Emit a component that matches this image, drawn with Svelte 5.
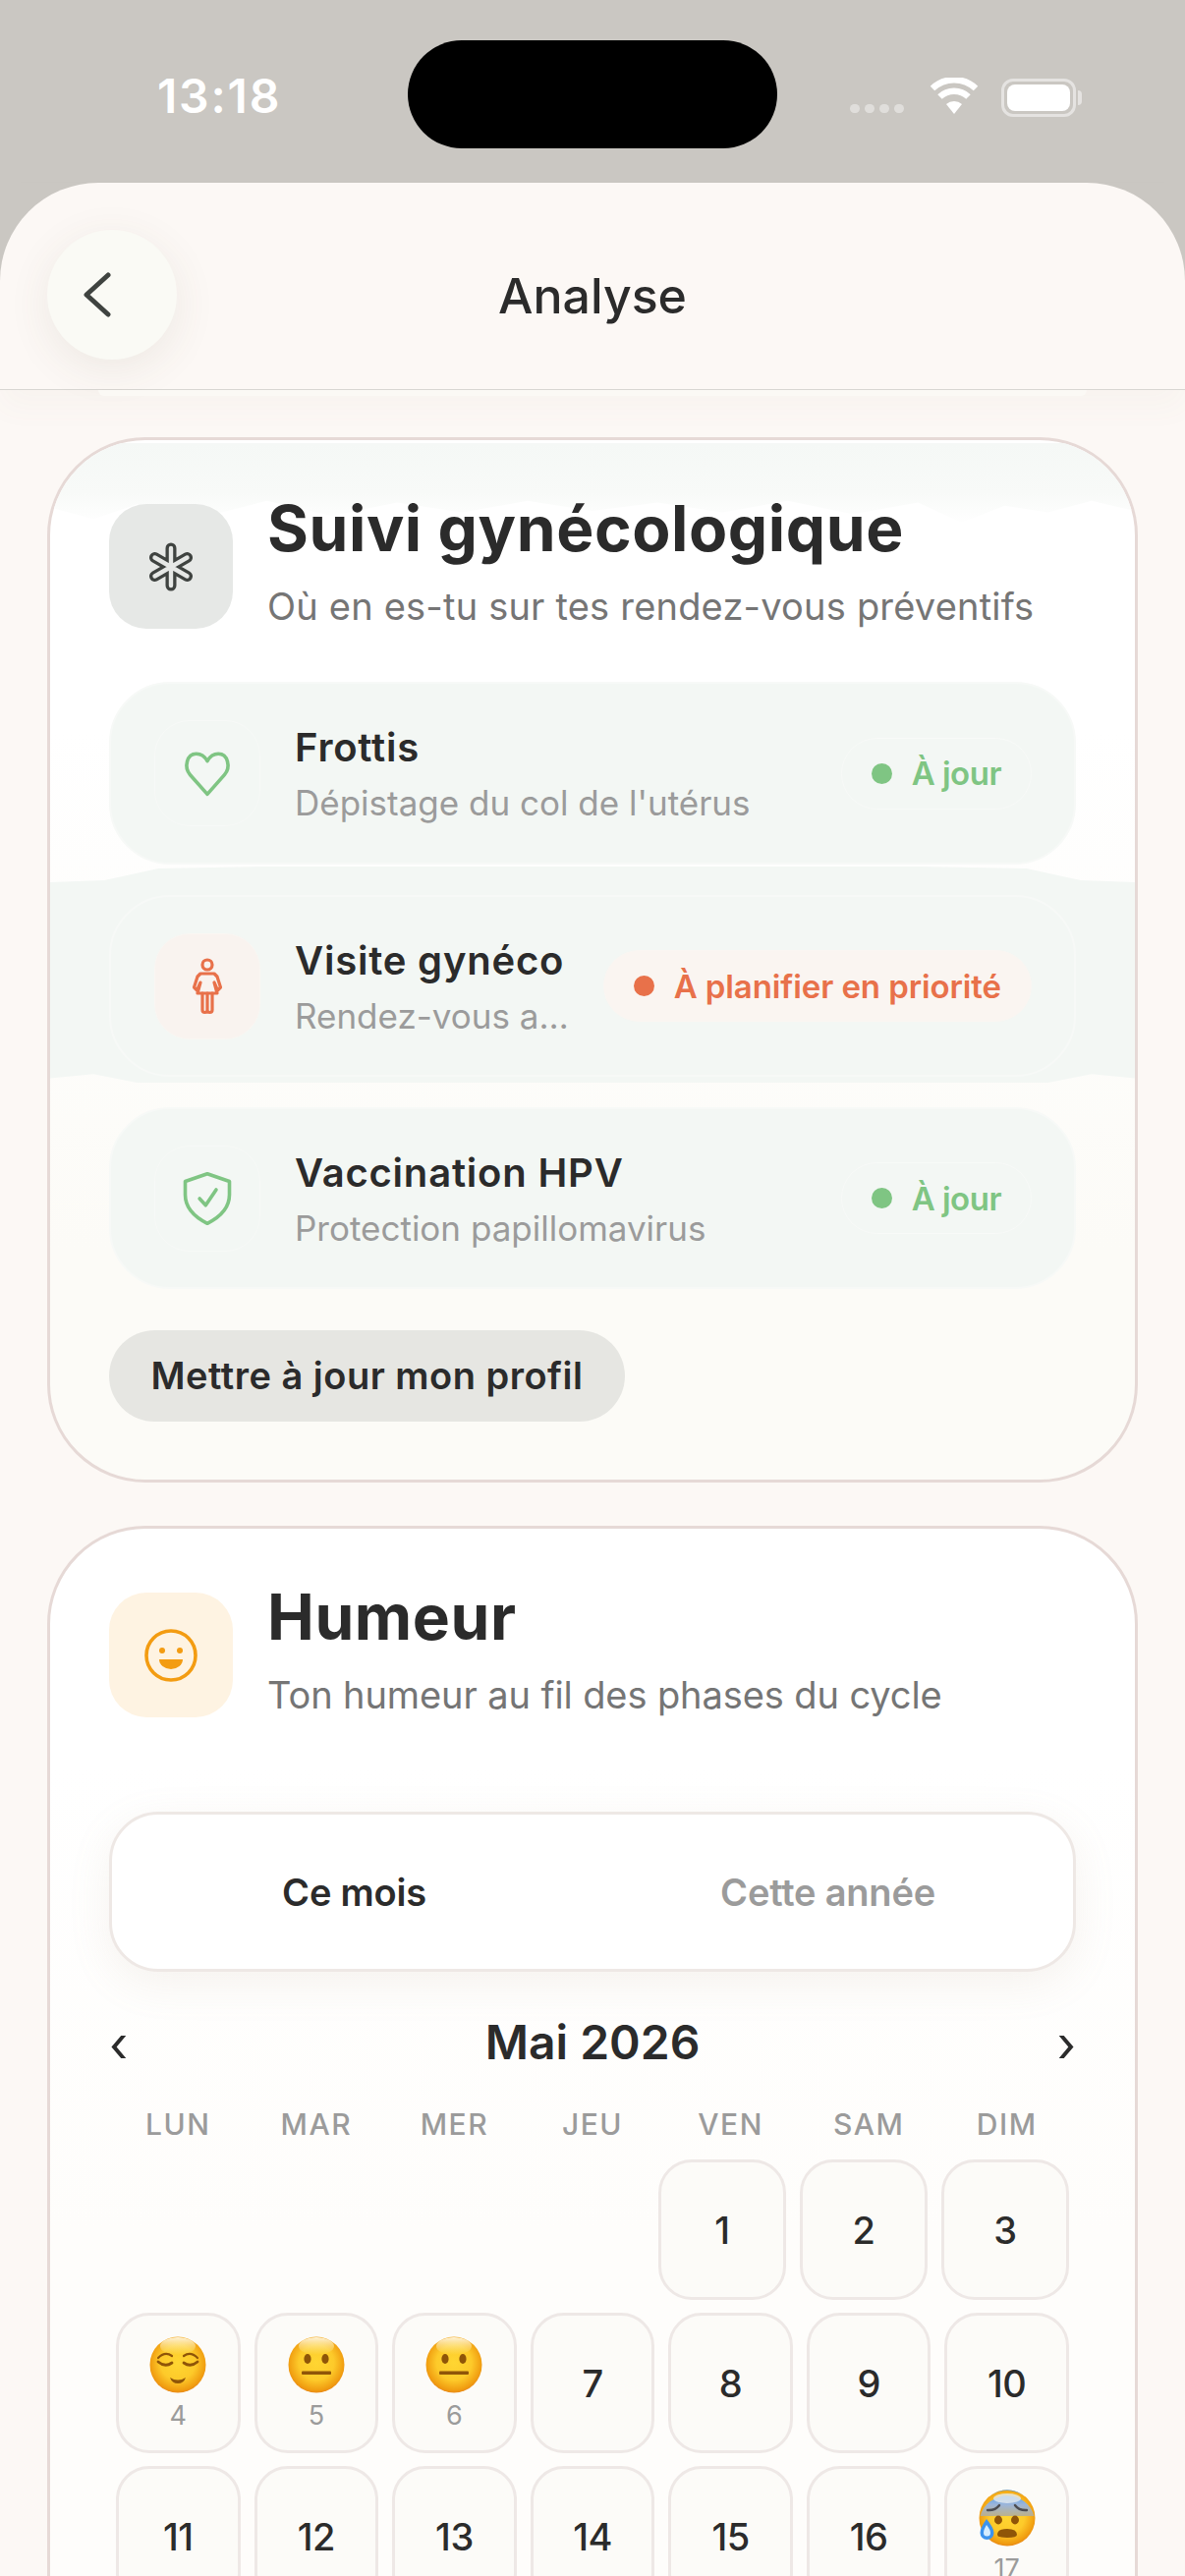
<script>
  const rows = [
    { title: 'Frottis', sub: "Dépistage du col de l'utérus", icon: 'heart', status: 'À jour', tone: 'ok' },
    { title: 'Visite gynéco', sub: 'Rendez-vous a…', icon: 'woman', status: 'À planifier en priorité', tone: 'warn' },
    { title: 'Vaccination HPV', sub: 'Protection papillomavirus', icon: 'shield', status: 'À jour', tone: 'ok' }
  ];
  const days = ['LUN', 'MAR', 'MER', 'JEU', 'VEN', 'SAM', 'DIM'];
  const firstWeek = [1, 2, 3];
  const weeks = [
    [
      { n: 4, mood: 'relieved' }, { n: 5, mood: 'neutral' }, { n: 6, mood: 'neutral' },
      { n: 7 }, { n: 8 }, { n: 9 }, { n: 10 }
    ],
    [
      { n: 11 }, { n: 12 }, { n: 13 }, { n: 14 }, { n: 15 }, { n: 16 }, { n: 17, mood: 'sweat' }
    ]
  ];
</script>

{#snippet face(mood)}
  <svg class="emoji" viewBox="0 0 58 58" aria-hidden="true">
    <defs>
      <radialGradient id="fg-{mood}" cx="50%" cy="46%" r="54%">
        <stop offset="0" stop-color="#ffd632" />
        <stop offset="0.58" stop-color="#fdca2a" />
        <stop offset="0.92" stop-color="#f09c10" />
        <stop offset="1" stop-color="#e98a18" />
      </radialGradient>
      <linearGradient id="gl-{mood}" x1="0" y1="0" x2="0" y2="1">
        <stop offset="0" stop-color="#fff7e6" stop-opacity=".95" />
        <stop offset="1" stop-color="#fff3a0" stop-opacity="0" />
      </linearGradient>
      <linearGradient id="bl-{mood}" x1="0" y1="0" x2="0" y2="1">
        <stop offset="0" stop-color="#5ea4ee" />
        <stop offset="0.45" stop-color="#9db5d8" />
        <stop offset="1" stop-color="#b5ae94" stop-opacity=".9" />
      </linearGradient>
    </defs>
    <circle cx="29" cy="29" r="28.5" fill="url(#fg-{mood})" />
    {#if mood === 'sweat'}
      <path d="M1.600 27A28.500 28.500 0 0 1 56.400 27Z" fill="url(#bl-{mood})" />
      <path d="M13 5.500A28.500 28.500 0 0 1 45 5.500 30 30 0 0 0 13 5.500Z" fill="#2f8cf0" />
      <ellipse cx="29" cy="9" rx="14" ry="5" fill="#e3e8ee" opacity=".8" />
      <path d="M9 21q8 .5 12-5M49 21q-8 .5-12-5" fill="none" stroke="#4d4d52" stroke-width="2.400" stroke-linecap="round" />
      <ellipse cx="20" cy="31" rx="4" ry="4.400" fill="#8f5508" />
      <ellipse cx="37" cy="31" rx="4" ry="4.400" fill="#8f5508" />
      <path d="M19 46q0-6 10-6t10 6q0 3-10 3t-10-3Z" fill="#8f5508" />
      <path d="M8 30q-6.500 9-6.500 14a7 7 0 0 0 14 0q0-5-7.500-14Z" fill="#3d93ee" />
      <path d="M8 36q-3 5-3 8a3.500 3.500 0 0 0 7 0q0-3-4-8Z" fill="#d5ecff" />
    {:else}
      <ellipse cx="29" cy="10" rx="18" ry="9" fill="url(#gl-{mood})" />
      {#if mood === 'relieved'}
        <path d="M9 22q7-7 14-2M49 22q-7-7-14-2" fill="none" stroke="#8f5508" stroke-width="2.200" stroke-linecap="round" />
        <path d="M9 26q7 6 14 1M35 27q7 5 14-1" fill="none" stroke="#8f5508" stroke-width="2.800" stroke-linecap="round" />
        <path d="M21 42q8 5 16 0q-2 6-8 6t-8-6Z" fill="#8f5508" />
      {:else}
        <ellipse cx="20" cy="23" rx="3.600" ry="5" fill="#8f5508" />
        <ellipse cx="38" cy="23" rx="3.600" ry="5" fill="#8f5508" />
        <rect x="14" y="35.500" width="30" height="3.600" rx="1" fill="#8f5508" />
      {/if}
    {/if}
  </svg>
{/snippet}

{#snippet rowIcon(name)}
  {#if name === 'heart'}
    <svg class="ri" viewBox="0 0 48 48" aria-hidden="true">
      <path d="M24 43 8.500 25.500C2.500 18.500 5.500 6.500 14 6.500c5 0 8 3 10 6.500 2-3.500 5-6.500 10-6.500 8.500 0 11.500 12 5.500 19Z" fill="none" stroke="#7fc583" stroke-width="3.200" stroke-linejoin="round" />
    </svg>
  {:else if name === 'woman'}
    <svg class="ri woman" viewBox="0 0 48 58" aria-hidden="true">
      <g fill="none" stroke="#e8714a" stroke-width="3.200" stroke-linejoin="round" stroke-linecap="round">
        <circle cx="24" cy="7" r="5" />
        <path d="M17 16h14l3 3 3.500 11-3 3-3.500-8 3 11H14l3-11-3.500 8-3-3L14 19Z" />
        <path d="M19 36v17a2.500 2.500 0 0 0 5 0V36M24 53a2.500 2.500 0 0 0 5 0V36" />
      </g>
    </svg>
  {:else}
    <svg class="ri" viewBox="0 0 48 48" aria-hidden="true">
      <path d="M24 1.500 44 8.500v12c0 11-8 20-20 26C12 40.500 4 31.500 4 20.500V8.500Z" fill="none" stroke="#7fc583" stroke-width="3.200" stroke-linejoin="round" />
      <path d="M17 24l5.500 6L32 16" fill="none" stroke="#7fc583" stroke-width="3.200" stroke-linecap="round" stroke-linejoin="round" />
    </svg>
  {/if}
{/snippet}

<div class="screen">
  <div class="status">
    <span class="time">13:18</span>
    <div class="island"></div>
    <div class="sys">
      <span class="signal"><i></i><i></i><i></i><i></i></span>
      <svg class="wifi" viewBox="0 0 50 38" aria-hidden="true">
        <path d="M25 37 17 27a12 12 0 0 1 16 0Z" fill="#fff" />
        <path d="M10.500 19.500a21 21 0 0 1 29 0M3 11a32 32 0 0 1 44 0" fill="none" stroke="#fff" stroke-width="6.500" />
      </svg>
      <span class="battery"><span class="level"></span></span>
    </div>
  </div>

  <div class="sheet">
    <header class="nav">
      <button class="back" aria-label="Retour">
        <svg viewBox="0 0 30 46" width="30" height="46" aria-hidden="true">
          <path d="M26 3 4 23l22 20" fill="none" stroke="#3f4340" stroke-width="5" stroke-linecap="round" stroke-linejoin="round" />
        </svg>
      </button>
      <h1>Analyse</h1>
    </header>

    <main class="content">
      <section class="card first">
        <div class="glow-top"></div>
        <div class="glow-row"></div>
        <div class="head">
          <div class="hicon grey">
            <svg viewBox="0 0 48 50" width="48" height="50" aria-hidden="true">
              <g stroke-linecap="round">
                <g stroke="#3f4340" stroke-width="11">
                  <path d="M24 6v38M7.500 15.500l33 19M40.500 15.500l-33 19" />
                </g>
                <g stroke="#e6e8e6" stroke-width="4.400">
                  <path d="M24 6v38M7.500 15.500l33 19M40.500 15.500l-33 19" />
                </g>
              </g>
            </svg>
          </div>
          <div class="htext">
            <h2>Suivi gynécologique</h2>
            <p class="s1">Où en es-tu sur tes rendez-vous préventifs</p>
          </div>
        </div>

        <div class="rows">
          {#each rows as r}
            <div class="row">
              <div class="ribox" class:warn={r.tone === 'warn'}>{@render rowIcon(r.icon)}</div>
              <div class="rtext">
                <div class="rtitle">{r.title}</div>
                <div class="rsub">{r.sub}</div>
              </div>
              <div class="pill" class:warn={r.tone === 'warn'}>
                <span class="dot"></span>{r.status}
              </div>
            </div>
          {/each}
        </div>

        <button class="update">Mettre à jour mon profil</button>
      </section>

      <section class="card second">
        <div class="head">
          <div class="hicon amber">
            <svg viewBox="0 0 56 56" width="56" height="56" aria-hidden="true">
              <circle cx="28" cy="28" r="25" fill="none" stroke="#f39c12" stroke-width="3.600" />
              <circle cx="19" cy="23" r="3" fill="#f39c12" />
              <circle cx="37" cy="23" r="3" fill="#f39c12" />
              <path d="M16 32h24a12 10 0 0 1-24 0Z" fill="#f39c12" />
            </svg>
          </div>
          <div class="htext">
            <h2>Humeur</h2>
            <p class="s2">Ton humeur au fil des phases du cycle</p>
          </div>
        </div>

        <div class="segment">
          <span class="on">Ce mois</span>
          <span>Cette année</span>
        </div>

        <div class="calhead">
          <span class="arrow">‹</span>
          <span class="month">Mai 2026</span>
          <span class="arrow">›</span>
        </div>

        <div class="weekdays">
          {#each days as d}<span>{d}</span>{/each}
        </div>

        <div class="week start">
          {#each firstWeek as n}<div class="cell wide"><span class="num">{n}</span></div>{/each}
        </div>
        {#each weeks as w}
          <div class="week">
            {#each w as c}
              <div class="cell" class:mooded={c.mood}>
                {#if c.mood}
                  {@render face(c.mood)}
                  <span class="small">{c.n}</span>
                {:else}
                  <span class="num">{c.n}</span>
                {/if}
              </div>
            {/each}
          </div>
        {/each}
      </section>
    </main>
  </div>
</div>

<style>
  :global(body) { margin: 0; background: #cac7c2; }
  .screen {
    width: 1206px; height: 2622px; overflow: hidden; position: relative;
    background: #cac7c2; font-family: Inter, "Liberation Sans", sans-serif; color: #2b2b2b;
  }
  .status {
    height: 186px; display: flex; justify-content: space-between; box-sizing: border-box;
    padding: 0 111px 0 160px;
  }
  .time { color: #fff; font-size: 48px; font-weight: 600; line-height: 56px; margin-top: 70px; letter-spacing: 1.800px; }
  .island { position: absolute; left: 415px; top: 41px; width: 376px; height: 110px; border-radius: 55px; background: #000; }
  .sys { display: flex; align-items: flex-start; margin-top: 78px; }
  .signal { display: flex; gap: 5px; margin-top: 28px; width: 81px; }
  .signal i { width: 10px; height: 9px; border-radius: 5px; background: rgba(255,255,255,.42); }
  .wifi { width: 50px; height: 38px; margin-top: 1px; }
  .battery {
    position: relative; width: 70px; height: 33px; margin: 2px 0 0 23px; box-sizing: content-box;
    border: 3px solid rgba(255,255,255,.5); border-radius: 12px; display: block;
  }
  .battery::after { content: ''; position: absolute; right: -9px; top: 9px; width: 4px; height: 15px; border-radius: 0 4px 4px 0; background: rgba(255,255,255,.5); }
  .level { position: absolute; inset: 3px; border-radius: 8px; background: #fff; }

  .sheet { background: #fcf8f5; border-radius: 100px 100px 0 0; height: 2436px; }
  .nav {
    height: 190px; padding-top: 20px; position: relative; display: flex; align-items: center; justify-content: center;
    border-bottom: 1px solid #d8d6d2; box-shadow: 0 18px 30px rgba(130,110,90,.035);
  }
  .nav::after {
    content: ''; position: absolute; left: 100px; right: 100px; bottom: -7px; height: 6px;
    background: #fbf9f5; border-radius: 0 0 14px 14px;
  }
  .back {
    position: absolute; left: 48px; top: 48px; width: 132px; height: 132px; border-radius: 50%; border: 0; padding: 0 30px 0 0;
    background: #fafaf5; box-shadow: 0 10px 44px rgba(90,80,60,.09); display: flex; align-items: center; justify-content: center;
  }
  h1 { margin: 0; font-size: 50px; font-weight: 500; line-height: 60px; }

  .content { padding: 48px 48px 0; display: flex; flex-direction: column; gap: 44px; }
  .card {
    position: relative; overflow: hidden; box-sizing: border-box; border: 3px solid #e6d9d6; border-radius: 100px;
    padding: 65px 60px 0; background: #fff;
  }
  .card.first { height: 1064px; background: linear-gradient(#fff 0, #fff 28%, #fcfbf7 78%); }
  .card.second { height: 1200px; background: linear-gradient(#fff 0, #fff 20%, #fefdfb 60%); }
  .glow-top {
    position: absolute; left: 0; right: 0; top: 3px; height: 84px;
    background: linear-gradient(#f5f8f6, #f8faf8 60%, #fff);
    clip-path: polygon(0 0, 100% 0, 100% 82%, 96% 70%, 92% 84%, 88% 76%, 84% 96%, 80% 72%, 74% 86%, 68% 70%, 62% 84%, 56% 72%, 50% 82%, 44% 70%, 38% 84%, 32% 72%, 26% 88%, 20% 70%, 14% 90%, 8% 74%, 4% 92%, 0 78%);
  }
  .glow-row {
    position: absolute; left: 0; right: 0; top: 434px; height: 220px; background: #f3f7f4;
    clip-path: polygon(0 16px, 5% 14px, 10% 2px, 20% 0, 80% 0, 90% 2px, 95% 14px, 100% 16px, 100% 98%, 96% 96%, 92% 100%, 8% 100%, 4% 96%, 0 98%);
  }
  .head { position: relative; display: flex; gap: 35px; align-items: flex-start; height: 127px; }
  .hicon { width: 126px; height: 127px; border-radius: 38px; display: flex; align-items: center; justify-content: center; flex: none; }
  .grey { background: #e6e8e6; }
  .amber { background: #fef3e2; }
  .htext { min-width: 0; }
  h2 { margin: -8px 0 0; font-size: 64px; font-weight: 700; line-height: 66px; white-space: nowrap; letter-spacing: .6px; }
  .htext p { margin: 23px 0 0; font-size: 38px; line-height: 46px; color: #757575; white-space: nowrap; }
  .s1 { letter-spacing: .2px; }
  .s2 { letter-spacing: -.1px; }

  .rows { position: relative; margin-top: 54px; display: flex; flex-direction: column; gap: 31px; }
  .row {
    height: 186px; box-sizing: border-box; display: flex; align-items: center; padding: 0 43px 0 44px;
    background: #f3f7f4; border: 2px solid #f7f9f7; border-radius: 62px;
  }
  .row + .row { height: 185px; }
  .ribox {
    width: 108px; height: 108px; border-radius: 36px; flex: none; display: flex; align-items: center; justify-content: center;
    border: 1.500px solid #f7f9f7; box-sizing: border-box;
  }
  .ribox.warn { background: #f9f3ef; border-color: #faf6f2; }
  .ri { width: 54px; height: 54px; }
  .ri.woman { width: 48px; height: 58px; }
  .rtext { margin-left: 35px; flex: 1; min-width: 0; margin-top: 2px; }
  .rtitle { font-size: 40px; font-weight: 600; line-height: 48px; white-space: nowrap; letter-spacing: .8px; }
  .rsub { font-size: 35px; line-height: 44px; margin-top: 10px; color: #9b9b9b; white-space: nowrap; }
  .pill {
    height: 73px; display: flex; align-items: center; gap: 20px; padding: 0 30px 0 30px; border-radius: 37px; box-sizing: border-box;
    font-size: 33px; font-weight: 600; color: #7fc583; border: 1.500px solid #f8faf8; white-space: nowrap; flex: none; letter-spacing: -.5px;
  }
  .pill.warn { background: #faf5f1; color: #e8714a; border-color: #faf6f2; letter-spacing: -.1px; }
  .dot { width: 21px; height: 21px; border-radius: 50%; background: currentColor; flex: none; }
  .update {
    position: relative; display: block; margin-top: 42px; height: 93px; width: 525px; border: 0; border-radius: 47px; background: #e6e6e2; color: #2b2b2b;
    font: 600 38px/93px Inter, sans-serif; padding: 0; letter-spacing: .5px;
  }

  .segment {
    position: relative; margin-top: 96px; height: 163px; box-sizing: border-box; border: 3px solid #eee8e5; border-radius: 50px; background: #fff;
    box-shadow: 0 12px 44px rgba(170,150,120,.11); display: grid; grid-template-columns: 1fr 1fr; align-items: center; text-align: center;
    font-size: 38px; font-weight: 600; color: #9b9b9b; letter-spacing: -.2px;
  }
  .segment span { position: relative; }
  .segment .on { color: #2b2b2b; left: 2px; }
  .segment span:last-child { left: -5px; }

  .calhead { margin-top: 42px; height: 60px; display: flex; justify-content: space-between; align-items: center; }
  .month { font-size: 48px; font-weight: 600; line-height: 60px; }
  .arrow { font-size: 50px; line-height: 60px; color: #2b2b2b; margin-top: 4px; }
  .weekdays, .week { display: grid; grid-template-columns: repeat(7, 1fr); gap: 14px; margin: 0 7px; }
  .weekdays { margin-top: 33px; height: 40px; text-align: center; font-size: 30px; font-weight: 500; line-height: 40px; color: #9b9b9b; letter-spacing: 1.500px; }
  .week { margin-top: 13px; }
  .weekdays + .week { margin-top: 16px; }
  .week.start { display: flex; justify-content: flex-end; }
  .cell {
    height: 143px; box-sizing: border-box; border: 3px solid #eee8e6; border-radius: 34px; background: #fcfbf8;
    display: flex; flex-direction: column; align-items: center; justify-content: center;
  }
  .cell.wide { width: 130px; }
  .cell.mooded { justify-content: flex-start; padding-top: 21px; }
  .num { font-size: 38px; font-weight: 500; line-height: 46px; letter-spacing: -.5px; }
  .small { font-size: 27px; line-height: 34px; margin-top: 6px; color: #9b9b9b; }
  .emoji { width: 58px; height: 58px; display: block; flex: none; }
</style>
